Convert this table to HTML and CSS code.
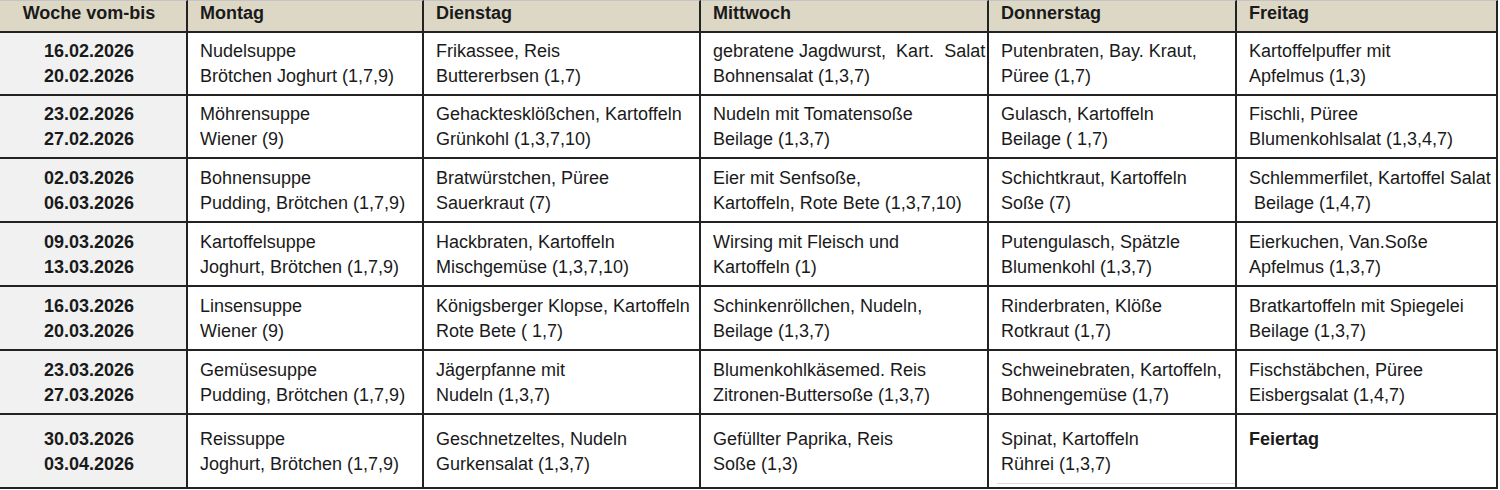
FILE: index.html
```html
<!DOCTYPE html>
<html lang="de">
<head>
<meta charset="utf-8">
<title>Speiseplan</title>
<link rel="stylesheet" href="styles.css">
</head>
<body>
<div class="plan">
  <div class="cell head week">Woche vom-bis</div>
  <div class="cell head">Montag</div>
  <div class="cell head">Dienstag</div>
  <div class="cell head">Mittwoch</div>
  <div class="cell head">Donnerstag</div>
  <div class="cell head last">Freitag</div>

  <div class="cell date"><span>16.02.2026</span><span>20.02.2026</span></div>
  <div class="cell"><span>Nudelsuppe</span><span>Brötchen Joghurt (1,7,9)</span></div>
  <div class="cell"><span>Frikassee, Reis</span><span>Buttererbsen (1,7)</span></div>
  <div class="cell"><span>gebratene Jagdwurst,  Kart.  Salat</span><span>Bohnensalat (1,3,7)</span></div>
  <div class="cell"><span>Putenbraten, Bay. Kraut,</span><span>Püree (1,7)</span></div>
  <div class="cell last"><span>Kartoffelpuffer mit</span><span>Apfelmus (1,3)</span></div>

  <div class="cell date"><span>23.02.2026</span><span>27.02.2026</span></div>
  <div class="cell"><span>Möhrensuppe</span><span>Wiener (9)</span></div>
  <div class="cell"><span>Gehacktesklößchen, Kartoffeln</span><span>Grünkohl (1,3,7,10)</span></div>
  <div class="cell"><span>Nudeln mit Tomatensoße</span><span>Beilage (1,3,7)</span></div>
  <div class="cell"><span>Gulasch, Kartoffeln</span><span>Beilage ( 1,7)</span></div>
  <div class="cell last"><span>Fischli, Püree</span><span>Blumenkohlsalat (1,3,4,7)</span></div>

  <div class="cell date"><span>02.03.2026</span><span>06.03.2026</span></div>
  <div class="cell"><span>Bohnensuppe</span><span>Pudding, Brötchen (1,7,9)</span></div>
  <div class="cell"><span>Bratwürstchen, Püree</span><span>Sauerkraut (7)</span></div>
  <div class="cell"><span>Eier mit Senfsoße,</span><span>Kartoffeln, Rote Bete (1,3,7,10)</span></div>
  <div class="cell"><span>Schichtkraut, Kartoffeln</span><span>Soße (7)</span></div>
  <div class="cell last"><span>Schlemmerfilet, Kartoffel Salat</span><span> Beilage (1,4,7)</span></div>

  <div class="cell date"><span>09.03.2026</span><span>13.03.2026</span></div>
  <div class="cell"><span>Kartoffelsuppe</span><span>Joghurt, Brötchen (1,7,9)</span></div>
  <div class="cell"><span>Hackbraten, Kartoffeln</span><span>Mischgemüse (1,3,7,10)</span></div>
  <div class="cell"><span>Wirsing mit Fleisch und</span><span>Kartoffeln (1)</span></div>
  <div class="cell"><span>Putengulasch, Spätzle</span><span>Blumenkohl (1,3,7)</span></div>
  <div class="cell last"><span>Eierkuchen, Van.Soße</span><span>Apfelmus (1,3,7)</span></div>

  <div class="cell date"><span>16.03.2026</span><span>20.03.2026</span></div>
  <div class="cell"><span>Linsensuppe</span><span>Wiener (9)</span></div>
  <div class="cell"><span>Königsberger Klopse, Kartoffeln</span><span>Rote Bete ( 1,7)</span></div>
  <div class="cell"><span>Schinkenröllchen, Nudeln,</span><span>Beilage (1,3,7)</span></div>
  <div class="cell"><span>Rinderbraten, Klöße</span><span>Rotkraut (1,7)</span></div>
  <div class="cell last"><span>Bratkartoffeln mit Spiegelei</span><span>Beilage (1,3,7)</span></div>

  <div class="cell date"><span>23.03.2026</span><span>27.03.2026</span></div>
  <div class="cell"><span>Gemüsesuppe</span><span>Pudding, Brötchen (1,7,9)</span></div>
  <div class="cell"><span>Jägerpfanne mit</span><span>Nudeln (1,3,7)</span></div>
  <div class="cell"><span>Blumenkohlkäsemed. Reis</span><span>Zitronen-Buttersoße (1,3,7)</span></div>
  <div class="cell"><span>Schweinebraten, Kartoffeln,</span><span>Bohnengemüse (1,7)</span></div>
  <div class="cell last"><span>Fischstäbchen, Püree</span><span>Eisbergsalat (1,4,7)</span></div>

  <div class="cell date"><span>30.03.2026</span><span>03.04.2026</span></div>
  <div class="cell"><span>Reissuppe</span><span>Joghurt, Brötchen (1,7,9)</span></div>
  <div class="cell"><span>Geschnetzeltes, Nudeln</span><span>Gurkensalat (1,3,7)</span></div>
  <div class="cell"><span>Gefüllter Paprika, Reis</span><span>Soße (1,3)</span></div>
  <div class="cell"><span>Spinat, Kartoffeln</span><span>Rührei (1,3,7)</span><i class="rule"></i></div>
  <div class="cell last"><b class="holiday">Feiertag</b><span>&nbsp;</span></div>
</div>
</body>
</html>
```

FILE: styles.css
```css
html, body {
  margin: 0;
  padding: 0;
  background: #ffffff;
}

.plan {
  display: grid;
  grid-template-columns: 188px 236px 277px 288px 248px 261px;
  grid-template-rows: 33px 63px 63px 64px 64px 64px 64px 74px;
  width: 1498px;
  font-family: "Liberation Sans", Arial, sans-serif;
  font-size: 18px;
  line-height: 25px;
  color: #1a1a1a;
}

.cell {
  box-sizing: border-box;
  position: relative;
  display: flex;
  flex-direction: column;
  justify-content: center;
  padding: 1px 0 0 12px;
  border-right: 2px solid #222222;
  border-bottom: 2px solid #222222;
  overflow: hidden;
  white-space: pre;
}

.head {
  justify-content: flex-start;
  padding-top: 0;
  border-top: 1px solid #c4c4c4;
  background: #ddd8c6;
  font-weight: bold;
}

.week {
  align-items: center;
  padding-left: 0;
  padding-right: 8px;
}

.date {
  align-items: center;
  padding-left: 0;
  padding-right: 8px;
  background: #f1f1f1;
  font-weight: bold;
}

.holiday {
  font-weight: bold;
}

.rule {
  position: absolute;
  left: 8px;
  right: 0;
  bottom: 3px;
  height: 1px;
  background: #dcdcdc;
}
```
